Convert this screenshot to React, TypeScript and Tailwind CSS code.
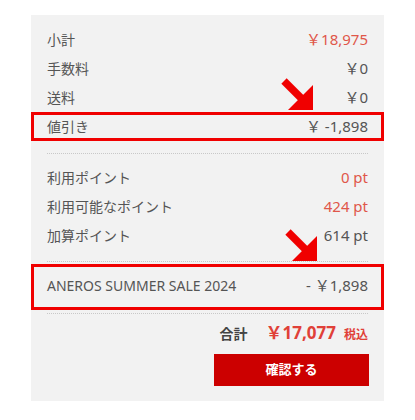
import React from 'react';

const font = { fontFamily: '"Noto Sans", "Noto Sans CJK JP", sans-serif' };

type Row = { label: string; value: string; red?: boolean; boxed?: boolean };

const summaryRows: Row[] = [
  { label: '小計', value: '￥18,975', red: true },
  { label: '手数料', value: '￥0' },
  { label: '送料', value: '￥0' },
  { label: '値引き', value: '￥ -1,898', boxed: true },
];

const pointRows: Row[] = [
  { label: '利用ポイント', value: '0 pt', red: true },
  { label: '利用可能なポイント', value: '424 pt', red: true },
  { label: '加算ポイント', value: '614 pt' },
];

const Line = ({ row }: { row: Row }) => (
  <div
    className={`flex h-[29px] items-center justify-between text-[14px] ${
      row.boxed ? 'border-[3px] border-[#f00000] px-[13px]' : 'px-4'
    }`}
  >
    <span className="text-[#555]">{row.label}</span>
    <span className={`text-[15px] ${row.red ? 'text-[#e0574a]' : 'text-[#555]'}`}>{row.value}</span>
  </div>
);

const Divider = () => <div className="mx-4 border-t border-dotted border-[#c8c8c8]" />;

// red annotation arrow, (x, y) is the tip in panel coordinates
const Arrow = ({ x, y }: { x: number; y: number }) => (
  <svg
    className="pointer-events-none absolute"
    style={{ left: x - 32, top: y - 32 }}
    width="34"
    height="34"
    viewBox="0 0 34 34"
  >
    <line x1="3" y1="3" x2="25" y2="25" stroke="#f00000" strokeWidth="7.5" />
    <polygon points="32,32 32,7 7,32" fill="#f00000" />
  </svg>
);

export default function App() {
  return (
    <div className="h-[420px] w-[415px] bg-white pt-[15px]" style={font}>
      <div className="relative mx-[31px] bg-[#f2f2f2] pt-[10px] pb-[15px]">
        {summaryRows.map((r) => (
          <Line key={r.label} row={r} />
        ))}
        <div className="mt-[12px]" />
        <Divider />
        <div className="mt-[9px]">
          {pointRows.map((r) => (
            <Line key={r.label} row={r} />
          ))}
        </div>
        <div className="mt-[11px]" />
        <Divider />
        <div className="mt-[2px] flex h-[46px] items-center justify-between border-[3px] border-[#f00000] px-[13px] pb-[3px] text-[14px] text-[#555]">
          <span>ANEROS SUMMER SALE 2024</span>
          <span className="text-[15px]">- ￥1,898</span>
        </div>
        <div className="mt-[3px]" />
        <Divider />
        <div className="mt-[6px] flex items-baseline justify-end gap-2 px-4">
          <span className="mr-[10px] text-[14px] font-bold text-[#444]">合計</span>
          <span className="text-[17px] font-bold text-[#e04038]">￥17,077</span>
          <span className="text-[12px] font-bold text-[#e04038]">税込</span>
        </div>
        <div className="mt-[8px] flex justify-end px-[15px]">
          <button className="h-[32px] w-[155px] bg-[#cc0000] text-[13px] font-bold text-white">
            確認する
          </button>
        </div>
        <Arrow x={282} y={95} />
        <Arrow x={286} y={246} />
      </div>
    </div>
  );
}
